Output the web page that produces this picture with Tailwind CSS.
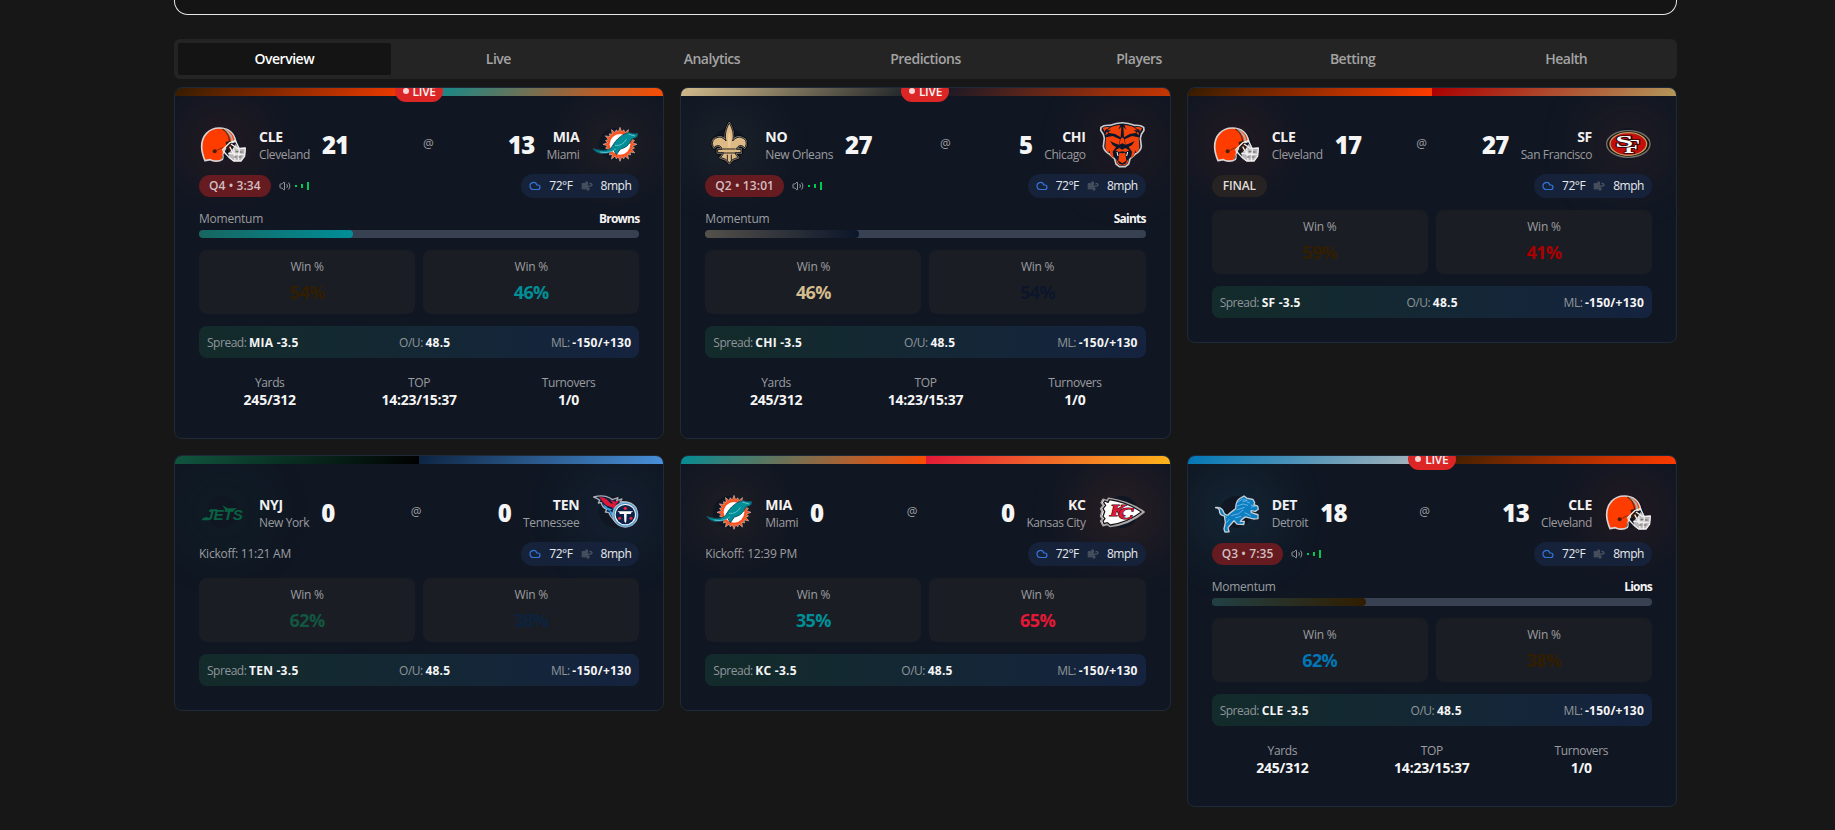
<!DOCTYPE html>
<html lang="en">
<head>
<meta charset="utf-8">
<title>Scores</title>
<script src="https://cdn.jsdelivr.net/npm/@tailwindcss/browser@4"></script>
</head>
<body class="h-[830px] overflow-hidden bg-[#171717] font-['Open_Sans','Noto_Sans',sans-serif] text-[#f5f5f5]">
<main class="ml-[174px] w-[1503px]">
  <div class="h-[15px] rounded-b-[14px] border border-t-0 border-[#e8e8e8] bg-[#141414]"></div>
  <nav class="mt-6 grid h-10 grid-cols-7 rounded-md bg-[#242424] p-1 text-center text-[14px] leading-8 font-semibold tracking-[-0.035em] text-[#a3a3a3]">
    <div class="mr-px rounded-xs bg-[#141414] text-white">Overview</div>
    <div>Live</div><div>Analytics</div><div>Predictions</div><div>Players</div><div>Betting</div><div>Health</div>
  </nav>
  <section id="games" class="mt-2 grid grid-cols-3 items-start gap-4"></section>
</main>
<script>
const sun = Array.from({length: 48}, (_, i) => {
  const a = i * Math.PI / 24, r = i % 2 ? 38 : (i % 4 ? 45 : 51);
  return (87 + r * Math.cos(a)).toFixed(1) + ',' + (73 + r * Math.sin(a)).toFixed(1);
}).join(' ');
const fleur = 'M73 9c9 16 15 34 10 54 8-10 18-14 27-10 15 4 17 20 9 30-8-9-20-9-25 5h14v10H91c1 8 5 11 9 15-12 2-21 6-27 17-6-11-15-15-27-17 4-4 8-7 9-15H38V88h14c-5-14-17-14-25-5-8-10-6-26 9-30 9-4 19 0 27 10-5-20 1-38 10-54Z';
const bear = 'M9 22c8-7 18-7 28-6C60 6 86 6 109 16c10-1 20-1 28 6l1 9-8 12-3 12 3 24c-1 10-9 18-19 24l-15 14-4 15-10 8H64l-10-8-4-15-15-14c-10-6-18-14-19-24l3-24-3-12-8-12Z';

const logos = {
CLE: `<path d="M61 24C29 24 8 48 8 80c0 18 5 30 10 42l16-3c8 6 27 6 36-1 4-10 0-20 8-30l12-17 20-7C106 39 88 24 61 24Z" fill="#ff3c00" stroke="#d8d4d2" stroke-width="5" stroke-linejoin="round"/>
<path d="M76 28c16 10 24 22 24 38" fill="none" stroke="#b0a9a6" stroke-width="6"/><path d="M70 27c14 8 21 22 22 40" fill="none" stroke="#6b2a12" stroke-width="4"/>
<path d="m80 66 14-4 10 14-10 20-12-8Z" fill="#32180c"/><circle cx="47" cy="94" r="6" fill="#4a1c0c"/><path d="m51 92 22-10" stroke="#8c2a08" stroke-width="3"/>
<path d="M88 100 100 88l10-16 10 12 18-1 2 12-5 17-8 11-24 1-13-10Z" fill="#b9b8b9"/>
<path d="M70 90 92 68l17-6 11 22M70 90l18 20 16 13h22l11-15 2-24-23 2-20-14M88 100l50 4M104 84l4 38M121 86l-3 36M92 80l14 26" fill="none" stroke="#f1eeee" stroke-width="4" stroke-linejoin="round"/>
<path d="m75 101-8 17M110 95h8m5 1h8m-26 15h8m6 0h8" stroke="#6b6565" stroke-width="3"/>`,
MIA: `<polygon points="${sun}" fill="#fc5420" stroke="#e4dad4" stroke-width="1.5"/><circle cx="87" cy="73" r="31" fill="#fff"/>
<path d="M6 86c20 6 38 8 52 0 8-8 12-20 22-29 10-9 21-18 34-19 9 2 17 4 26 3l-2 9c-5 3-11 5-16 7-7 18-19 27-34 30l-12 17-8-14c-21 15-47 15-62-4Z" fill="#008e97" stroke="#155469" stroke-width="3"/>
<path d="M72 76c14 2 26-4 34-18M28 96c18 4 34 0 46-9M112 42l20 6" fill="none" stroke="#65c4cb" stroke-width="3"/>`,
NO: `<g stroke-linejoin="round"><path d="${fleur}" fill="#15161a" stroke="#0c0d11" stroke-width="12"/><path d="${fleur}" fill="#15161a" stroke="#8b8983" stroke-width="6"/><path d="${fleur}" fill="#dcb985" stroke="#1b1a1a" stroke-width="3"/></g>
<path d="M73 34c7 18 5 36 1 54h-2c-4-18-6-36 1-54Z" fill="#edcb98"/><path d="M54 87h38M54 99h38M67 104v18m12-18v18" stroke="#28241f" stroke-width="3"/>`,
CHI: `<path d="${bear}" fill="#0b162a" stroke="#c8cacb" stroke-width="5" stroke-linejoin="round"/>
<g fill="#f2420a"><path d="M14 24c7-4 15-4 21-2l-6 5c-6 0-8 3-9 9Zm118 0c-7-4-15-4-21-2l6 5c6 0 8 3 9 9Z"/>
<path d="M39 22c10-5 18-6 28-7l-6 14 9-9-2 32-17-10-21-4 9-9-12 3 3 9-8 4c3-11 8-17 17-23Zm68 0c-10-5-18-6-28-7l6 14-9-9 2 32 17-10 21-4-9-9 12 3-3 9 8 4c-3-11-8-17-17-23Z"/>
<path d="m24 52 20-4 22 10-3 16-13-4-14-7 8 12 10 6-10 14 3 20-9-8-4-16-3 8c-6-6-9-12-9-20Zm98 0-20-4-22 10 3 16 13-4 14-7-8 12-10 6 10 14-3 20 9-8 4-16 3 8c6-6 9-12 9-20Z"/>
<path d="m68 56 5-4 5 4 4 18-9-4-9 4Z"/><path d="m52 91 12-7 9 5 9-5 12 7-10 5-11-2-11 2Z"/><path d="m64 98 9 2 9-2 3 24-12 8-12-8Z"/><path d="m54 117 5 6 5 8 9 3 9-3 5-8 5-6-3 12-8 7H65l-8-7Z"/></g>
<path d="m57 96 3 12m29-12-3 12" stroke="#fff" stroke-width="3"/>`,
SF: `<ellipse cx="73" cy="72" rx="65" ry="40" fill="#12110f" stroke="#77746f" stroke-width="4"/><ellipse cx="73" cy="72" rx="55" ry="34" fill="#c30f0b" stroke="#c79b5e" stroke-width="4"/>
<g font-family="Liberation Serif, serif" font-weight="bold" fill="#fff" stroke="#2b0706" stroke-width="5" paint-order="stroke"><text x="60" y="100" font-size="54" textLength="48" lengthAdjust="spacingAndGlyphs">F</text><text x="34" y="82" font-size="50" textLength="54" lengthAdjust="spacingAndGlyphs">S</text></g>`,
NYJ: `<path d="m70 52 16 9h28l-9 6H80Z" fill="#0a6041"/><path d="M7 97h24l5-8H13Z" fill="#0a6041"/><path d="m34 64h22l-4 6H30Z" fill="#0a6041"/><text x="18" y="97" font-family="Liberation Sans, sans-serif" font-size="44" font-weight="bold" font-style="italic" fill="#0a6041" textLength="114" lengthAdjust="spacingAndGlyphs">JETS</text>`,
TEN: `<path d="M8 27c18-5 36-4 49 3l7 5 17-6-4 9 16-5-6 9c18-3 39 2 49 20L76 104C67 93 57 87 54 74l-11-2 4-8c-9-4-15-10-16-20l-9 1 4-8c-6-5-12-8-18-10Z" fill="#10203f" stroke="#a9adb5" stroke-width="4" stroke-linejoin="round"/>
<path d="M24 28c17-1 26 7 34 18l31 6-21 8-16-5c-11-4-15-14-28-27Z" fill="#dc1738"/><path d="M37 48c8 9 20 13 31 13l21-19c10 1 20 3 28 11L69 93c-6-8-12-14-13-24-9-4-18-11-19-21Z" fill="#35a4e7"/><path d="m58 35 14 6 12-5-4 9-12 5Z" fill="#d8193d"/><path d="m48 56 22 9-9 3 10 7" fill="none" stroke="#10203f" stroke-width="4"/>
<circle cx="103" cy="80" r="39" fill="#b3bac2"/><circle cx="103" cy="80" r="36" fill="#4d9bd4"/><circle cx="103" cy="80" r="32" fill="#f7f7f8"/><circle cx="103" cy="80" r="29" fill="#0c2347"/>
<path d="m79 70 7 4v4h13l1 22 3 6 3-6 1-22h13v-4l7-4Z" fill="#fff"/><g fill="#ee203f"><circle cx="103" cy="61" r="5"/><circle cx="86" cy="91" r="4.5"/><circle cx="120" cy="91" r="4.5"/></g>`,
KC: `<path d="M32 31c38 6 72 16 106 41-33 28-66 39-102 43l-8-6-13 4-7-14 6-6-6-8 4-15-4-8 8-10-6-8 5-10 12 4Z" fill="#fff" stroke="#a8a6a6" stroke-width="5" stroke-linejoin="round"/><path d="M34 35c34 5 66 16 96 37-30 23-60 34-93 39l-9-7-10 3-3-8 6-7-6-7 5-14-5-9 8-10-6-8 3-5 10 4Z" fill="#fff" stroke="#1b1719" stroke-width="4" stroke-linejoin="round"/>
<g font-family="Liberation Serif, serif" font-weight="bold" font-style="italic" fill="#e31837" stroke="#38121a" stroke-width="3" paint-order="stroke"><text x="35" y="84" font-size="50" textLength="46" lengthAdjust="spacingAndGlyphs">K</text><text x="60" y="93" font-size="49" textLength="46" lengthAdjust="spacingAndGlyphs">C</text></g>`,
DET: `<path d="M11 59c9-1 18 1 23 11 2 7 6 11 14 11 7-9 16-12 23-19 0-12 3-23 12-29l13-7 8 6 19 4 5 9-2 6 11 4 2 9-9 6-13-2 1 6 20 6v11l-14 1-24-6-11 8-4 5h12l-2 9-20-1-9-10-10 11-8 9 3 12-12 1-3-9 4-19-3-19c-11-1-15-10-15-17-2-5-7-6-11-6Z" transform="translate(0 -1) translate(0 124) scale(1 1.04) translate(0 -121)" fill="#0c7fc3" stroke="#c4cdd3" stroke-width="4" stroke-linejoin="round"/>
<path d="m77 43 12-8 17 2-14 5m-17 12 18-6 15 4M74 66l24-8M58 83l22-6 14-12m4 9 18 9m-47 7 18-5M38 82l7 8m-1 14 8-11M116 51l14 3-13 4m-12-16 9 3" fill="none" stroke="#8dcaee" stroke-width="2"/>`
};

const teams = {
  CLE: ['Cleveland', '#311d00', '#ff3c00', 'rgba(255,60,0,.11)'],
  MIA: ['Miami', '#008e97', '#fc4c02', 'rgba(252,120,50,.09)'],
  NO: ['New Orleans', '#d3bc8d', '#101820', 'rgba(211,188,141,.09)'],
  CHI: ['Chicago', '#0b162a', '#c83803', 'rgba(200,56,3,.11)'],
  SF: ['San Francisco', '#aa0000', '#b3995d', 'rgba(190,80,50,.13)'],
  NYJ: ['New York', '#125740', '#000000', 'rgba(18,87,64,.12)'],
  TEN: ['Tennessee', '#0c2340', '#4b92db', 'rgba(60,130,200,.12)'],
  KC: ['Kansas City', '#e31837', '#ffb81c', 'rgba(240,90,40,.17)'],
  DET: ['Detroit', '#0076b6', '#b0b7bc', 'rgba(60,160,200,.16)']
};

const games = [
  {a: 'CLE', h: 'MIA', as: 21, hs: 13, q: 'Q4 • 3:34', lead: 'Browns', bar: '#176660', w: [54, 46]},
  {a: 'NO', h: 'CHI', as: 27, hs: 5, q: 'Q2 • 13:01', lead: 'Saints', bar: '#55514b', w: [46, 54]},
  {a: 'CLE', h: 'SF', as: 17, hs: 27, final: true, w: [59, 41]},
  {a: 'NYJ', h: 'TEN', as: 0, hs: 0, kick: '11:21 AM', w: [62, 38]},
  {a: 'MIA', h: 'KC', as: 0, hs: 0, kick: '12:39 PM', w: [35, 65]},
  {a: 'DET', h: 'CLE', as: 18, hs: 13, q: 'Q3 • 7:35', lead: 'Lions', bar: '#214044', w: [62, 38]}
];

const logo = t => `<div class="relative size-12 shrink-0"><div class="absolute inset-2 rounded-full" style="box-shadow:0 0 60px 22px ${teams[t][3]}"></div><svg class="relative size-12" viewBox="0 0 144 144">${logos[t]}</svg></div>`;
const name = t => `<div class="pt-px"><div class="h-5 text-[14px] leading-[19px] font-bold tracking-[-0.02em]">${t}</div><div class="h-4 text-[12px] leading-4 tracking-[-0.032em] text-[#9c9da0]">${teams[t][0]}</div></div>`;
const score = s => `<div class="pt-0.5 text-[24px] leading-8 font-extrabold tracking-[-0.03em]">${s}</div>`;
const half = t => `<div class="flex-1" style="background:linear-gradient(135deg,${teams[t][1]},${teams[t][2]})"></div>`;

const status = g => g.q
  ? `<div class="flex items-center gap-2"><div class="h-[22px] rounded-full bg-[#651b1f] px-2.5 text-[12px] leading-[22px] font-semibold tracking-[0.008em] text-[#d2bfc2]">${g.q}</div>
     <div class="flex items-center gap-1"><svg class="size-3" viewBox="0 0 24 24" fill="none" stroke="#96989c" stroke-width="2" stroke-linecap="round" stroke-linejoin="round"><path d="M11 4.7a.7.7 0 0 0-1.2-.5L6.4 7.6A1.4 1.4 0 0 1 5.4 8H3a1 1 0 0 0-1 1v6a1 1 0 0 0 1 1h2.4a1.4 1.4 0 0 1 1 .4l3.4 3.4a.7.7 0 0 0 1.2-.5ZM16 9a5 5 0 0 1 0 6M19.400 18.400a9 9 0 0 0 0-12.700"/></svg>
     <i class="h-0.5 w-0.5 bg-green-500"></i><i class="h-1 w-0.5 bg-green-500"></i><i class="h-2 w-0.5 bg-green-500"></i></div></div>`
  : g.final ? `<div class="h-[22px] rounded-full bg-[#272322] px-[11px] text-[12px] leading-[22px] font-semibold tracking-[-0.01em] text-[#e0dedd]">FINAL</div>`
  : `<div class="text-[12px] leading-4 tracking-[-0.02em] text-[#9c9da0]">Kickoff: ${g.kick}</div>`;

const stat = (k, v) => `<div><div class="text-[12px] leading-4 tracking-[-0.03em] text-[#9c9da0]">${k}</div><div class="text-[14px] leading-[18px] font-bold tracking-[-0.015em]">${v}</div></div>`;
const win = (t, p) => `<div class="h-16 rounded-lg bg-[#1b1d24] pt-[9px] text-center"><div class="text-[12px] leading-4 tracking-[-0.02em] text-[#9c9da0]">Win %</div><div class="mt-[3px] text-[18px] leading-7 font-bold tracking-[-0.035em]" style="color:${teams[t][1]}">${p}%</div></div>`;
const odd = (k, v) => `<div class="text-[#8f9599]">${k}: <b class="font-bold tracking-[0.02em] text-[#f5f5f5]">${v}</b></div>`;

document.getElementById('games').innerHTML = games.map(g => `
<article class="relative overflow-hidden rounded-lg border border-[#1f2a38] bg-[#101723] ${g.q ? 'h-[352px]' : 'h-[256px]'}">
  <div class="flex h-2">${half(g.a)}${half(g.h)}</div>
  ${g.q ? `<div class="absolute -top-2 left-1/2 z-10 flex h-[22px] w-12 -translate-x-1/2 items-center justify-center gap-1 rounded-full bg-[#dc2626] pt-0.5 text-[12px] leading-[22px] font-semibold tracking-[-0.025em]"><i class="-mt-0.5 size-1.5 rounded-full bg-[#fbd5d5]"></i>LIVE</div>` : ''}
  <div class="px-6 pt-6">
    <div class="flex h-12 items-center justify-between">
      <div class="flex items-center gap-3">${logo(g.a)}${name(g.a)}${score(g.as)}</div>
      <div class="text-[12px] leading-4 text-[#9c9da0]">@</div>
      <div class="flex items-center gap-3 text-right">${score(g.hs)}${name(g.h)}${logo(g.h)}</div>
    </div>
    <div class="relative mt-1.5 flex h-6 items-center justify-between">
      ${status(g)}
      <div class="flex h-6 w-[118px] items-center justify-between rounded-full bg-[#15223a] px-2 text-[12px] tracking-[-0.04em] text-[#e8eaed]">
        <svg class="size-3" viewBox="0 0 24 24" fill="none" stroke="#3473d8" stroke-width="2.400" stroke-linecap="round" stroke-linejoin="round"><path d="M17.500 19H9a7 7 0 1 1 6.710-9h1.790a4.500 4.500 0 1 1 0 9Z"/></svg>
        <span class="font-medium">72°F</span>
        <svg class="size-3" viewBox="0 0 24 24" fill="none" stroke="#4b5563" stroke-width="2.500" stroke-linecap="round"><path fill="#3a4353" stroke="none" d="M2 6h12v13H2z"/><path d="M2 8h9.500M17.700 7.700A2.500 2.500 0 1 1 19.500 12H2M9.600 4.600A2 2 0 1 1 11 8M12.600 19.400A2 2 0 1 0 14 16H2"/></svg>
        <span class="font-medium">8mph</span>
      </div>
    </div>
    ${g.q ? `<div class="mt-[13px] flex justify-between text-[12px] leading-4 tracking-[-0.02em] text-[#9c9da0]"><span>Momentum</span><span class="font-bold tracking-[-0.065em] text-[#f5f5f5]">${g.lead}</span></div>
    <div class="mt-[3px] h-2 overflow-hidden rounded-full bg-[#374151]"><div class="h-2 w-[35%] rounded-full" style="background:linear-gradient(90deg,${g.bar},${teams[g.h][1]})"></div></div>` : ''}
    <div class="relative mt-3 grid grid-cols-2 gap-2">${win(g.a, g.w[0])}${win(g.h, g.w[1])}</div>
    <div class="mt-3 flex h-8 items-center justify-between rounded-lg bg-linear-to-r from-[#132b2a] to-[#15233f] px-2 pt-px text-[12px] leading-4 tracking-[-0.04em]">${odd('Spread', g.h + ' -3.5')}${odd('O/U', '48.5')}${odd('ML', '-150/+130')}</div>
    ${g.q ? `<div class="mt-[17px] grid grid-cols-3 gap-2 text-center">${stat('Yards', '245/312')}${stat('TOP', '14:23/15:37')}${stat('Turnovers', '1/0')}</div>` : ''}
  </div>
</article>`).join('');
</script>
</body>
</html>
